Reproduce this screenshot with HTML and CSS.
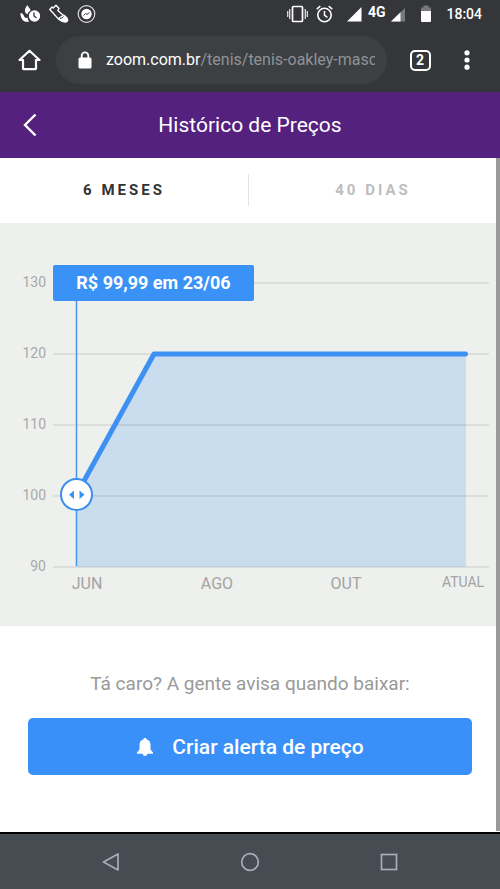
FILE: index.html
```html
<!DOCTYPE html>
<html lang="pt-BR">
<head>
<meta charset="utf-8">
<meta name="viewport" content="width=device-width, initial-scale=1">
<title>Histórico de Preços</title>
<link rel="stylesheet" href="styles.css">
</head>
<body>
<div class="screen">
  <div class="status">
    <div class="status-apps">
      <svg width="21" height="20" viewBox="0 0 21 20">
        <path d="M6 9.500C3.500 6 6 3 7.500 1c.3 2 3 3.500 3 5.500-1.200.8-2.500 2-3.300 4-.5-.6-.7-.9-1.200-1z" fill="#fff"/>
        <path d="M.5 9c2 0 3 1.500 3.500 3 .7 1.800 2 2.500 3.500 1.500.3 2 .8 3 1.800 4C4 19 .2 15 .5 9z" fill="#fff"/>
        <circle cx="14.500" cy="12" r="5.700" fill="#fff"/>
        <path d="M14 8.500V12l2.500 2" fill="none" stroke="#35363a" stroke-width="1.300"/>
      </svg>
      <svg width="20" height="20" viewBox="0 0 20 20">
        <path d="M.8 5.500 3 3l1.200 1L7 1.200 10 4.500 8.800 6.500l5 4.500c3 1.500 5 3.500 4.800 5.700-.3 1.800-3 1.300-5.300.7C10 16.500 8.500 14 5 10z" fill="none" stroke="#fff" stroke-width="1.400" stroke-linejoin="round"/>
        <path d="m9 14 5-3c3 1.500 4.700 3.500 4.500 5.700-.3 1.800-3 1.300-5.300.7-1.700-.8-3-1.700-4.200-3.400z" fill="#fff"/>
        <path d="M11 14.500q2.500-.2 3.500-2" fill="none" stroke="#35363a" stroke-width="1"/>
      </svg>
      <svg width="19" height="20" viewBox="0 0 19 20">
        <circle cx="9.500" cy="10" r="8.300" fill="none" stroke="#ddd" stroke-width="1.200"/>
        <circle cx="9.500" cy="10" r="5.200" fill="#fff"/>
        <path d="m6.500 11.500 2-2 1.500 1 2.500-2" fill="none" stroke="#35363a" stroke-width="1"/>
      </svg>
    </div>
    <div class="status-system">
      <div class="status-alerts">
        <svg width="21" height="18" viewBox="0 0 21 18">
          <rect x="5.500" y="1.500" width="10" height="15" rx="1" fill="none" stroke="#fff" stroke-width="1.700"/>
          <path d="M2.700 4v10M18.300 4v10M.7 6v6M20.300 6v6" stroke="#ddd" stroke-width="1.300"/>
        </svg>
        <svg width="17" height="18" viewBox="0 0 17 18">
          <circle cx="8.500" cy="10" r="6.700" fill="none" stroke="#fff" stroke-width="1.600"/>
          <path d="M8.500 6v4.300l3 2M.7 4.200l3.600-3M16.300 4.200l-3.600-3" fill="none" stroke="#fff" stroke-width="1.500"/>
        </svg>
      </div>
      <div class="status-signal">
        <svg width="15" height="18" viewBox="0 0 15 18"><path d="M14.500 2v14.500H0z" fill="#fff"/></svg>
        <span class="network">4G</span>
        <svg width="15" height="18" viewBox="0 0 15 18"><path d="M14 3v13.500H0z" fill="#77787b"/><path d="M9.500 7.300v9.200H0z" fill="#fff"/></svg>
      </div>
      <svg width="12" height="18" viewBox="0 0 12 18"><path d="M3.500.5h5v2H11V6H1V2.500h2.500z" fill="#77787b"/><path d="M1 6h10v10q0 1-1 1H2q-1 0-1-1z" fill="#fff"/></svg>
      <time class="clock">18:04</time>
    </div>
  </div>

  <div class="browser">
    <button class="icon-button" aria-label="Início">
      <svg width="23" height="22" viewBox="0 0 23 22"><path d="M1.500 11 11.500 1.700 21.500 11H18v8.500q0 .7-.7.7H5.700q-.7 0-.7-.7V11z" fill="none" stroke="#fff" stroke-width="2.200" stroke-linejoin="round"/></svg>
    </button>
    <button class="address">
      <svg class="lock" width="14" height="18" viewBox="0 0 14 18"><path d="M3.700 7V4.700a3.300 3.300 0 0 1 6.600 0V7" fill="none" stroke="#fff" stroke-width="1.800"/><rect x=".5" y="6.500" width="13" height="11" rx="1.500" fill="#fff"/></svg>
      <span class="url">zoom.com.br<span class="path">/tenis/tenis-oakley-masc</span></span>
    </button>
    <button class="icon-button tab-count" aria-label="Guias abertas"><span class="count">2</span></button>
    <button class="icon-button" aria-label="Mais opções">
      <svg width="6" height="20" viewBox="0 0 6 20" fill="#fff"><circle cx="3" cy="2.800" r="2.600"/><circle cx="3" cy="10" r="2.600"/><circle cx="3" cy="17.200" r="2.600"/></svg>
    </button>
  </div>

  <header class="header">
    <button class="back" aria-label="Voltar">
      <svg width="14" height="24" viewBox="0 0 14 24"><path d="M12.500 1.500 2 12l10.500 10.500" fill="none" stroke="#fff" stroke-width="2.400"/></svg>
    </button>
    <h1 class="title">Histórico de Preços</h1>
  </header>

  <main class="page">
    <div class="tabs">
      <button class="tab active">6 MESES</button>
      <button class="tab">40 DIAS</button>
    </div>

    <section class="chart-panel">
      <svg class="chart" viewBox="0 0 500 403" role="img" aria-label="Preço de junho até hoje">
        <path class="area" d="M76.500 271.500 154 131H466V344H76.500z"/>
        <path class="grid" d="M53 60H489M53 131H489M53 202H489M53 273H489M53 344H489"/>
        <g class="y-label">
          <text x="46" y="64">130</text>
          <text x="46" y="135">120</text>
          <text x="46" y="206">110</text>
          <text x="46" y="277">100</text>
          <text x="46" y="348">90</text>
        </g>
        <g class="x-label">
          <text x="87" y="366">JUN</text>
          <text x="217" y="366">AGO</text>
          <text x="346" y="366">OUT</text>
          <text class="current" x="463" y="364">ATUAL</text>
        </g>
        <path class="line" d="M76.500 271.500 154 131H465.500"/>
        <path class="cursor" d="M76.500 60V343"/>
        <circle class="handle" cx="76.500" cy="271.500" r="15.500"/>
        <path class="arrows" d="M74 267.500v8.500l-5-4.250zM79.500 267.500v8.500l5-4.250z"/>
        <rect class="tip" x="53" y="42" width="201" height="36" rx="2"/>
        <text class="tip-text" x="153.500" y="66">R$ 99,99 em 23/06</text>
      </svg>
    </section>

    <section class="alert">
      <p class="question">Tá caro? A gente avisa quando baixar:</p>
      <button class="create">
        <svg width="18" height="20" viewBox="0 0 18 20"><path d="M9 1c1 0 1.700.5 1.700 1.500C13.500 3.300 14.500 5.500 14.500 8v4.500L17 15.500v1.300H1v-1.300l2.500-3V8c0-2.500 1-4.700 3.800-5.500C7.300 1.500 8 1 9 1zM6.500 16.500h5a2.500 2.500 0 0 1-5 0z" fill="#fff"/></svg>
        <span>Criar alerta de preço</span>
      </button>
    </section>
    <div class="scrollbar"></div>
  </main>

  <nav class="nav">
    <button class="nav-button" aria-label="Voltar"><svg width="20" height="20" viewBox="0 0 20 20"><path d="M17 2v16L2.500 10z" fill="none" stroke="#a9adb5" stroke-width="1.700" stroke-linejoin="round"/></svg></button>
    <button class="nav-button" aria-label="Tela inicial"><svg width="20" height="20" viewBox="0 0 20 20"><circle cx="10" cy="10" r="8.300" fill="none" stroke="#a9adb5" stroke-width="1.700"/></svg></button>
    <button class="nav-button" aria-label="Recentes"><svg width="20" height="20" viewBox="0 0 20 20"><rect x="2.500" y="2.500" width="15" height="15" fill="none" stroke="#a9adb5" stroke-width="1.700"/></svg></button>
  </nav>
</div>
</body>
</html>
```
FILE: styles.css
```css
* { box-sizing: border-box; }

body {
  margin: 0;
  font-family: Roboto, "Liberation Sans", sans-serif;
  background: #fff;
}

button {
  margin: 0;
  padding: 0;
  border: 0;
  background: none;
  font-family: inherit;
  color: inherit;
  cursor: pointer;
}

svg { display: block; flex: none; }

.screen {
  min-height: 100vh;
  display: flex;
  flex-direction: column;
}

/* System status bar */
.status {
  display: flex;
  justify-content: space-between;
  align-items: center;
  height: 28px;
  padding: 0 18px 0 20px;
  background: #35363a;
  color: #fff;
}

.status-apps, .status-alerts { display: flex; align-items: center; gap: 8px; }
.status-system { display: flex; align-items: center; gap: 14px; }
.status-signal { display: flex; align-items: center; gap: 6px; }
.network { font-size: 14px; line-height: 14px; font-weight: 700; align-self: flex-start; }
.clock { font-size: 14px; line-height: 20px; font-weight: 500; }

/* Browser toolbar */
.browser {
  display: flex;
  align-items: center;
  height: 64px;
  padding: 0 12px 0 8px;
  background: #35363a;
  color: #fff;
}

.icon-button {
  display: flex;
  align-items: center;
  justify-content: center;
  width: 42px;
  height: 48px;
}

.address {
  flex: 1;
  min-width: 0;
  display: flex;
  align-items: center;
  gap: 14px;
  height: 48px;
  margin: 0 12px 0 6px;
  padding: 0 12px 0 22px;
  border-radius: 24px;
  background: #3c4043;
  text-align: left;
}

.url {
  overflow: hidden;
  white-space: nowrap;
  font-size: 16px;
  line-height: 24px;
}

.path { color: #909396; }
.tab-count { margin-right: 5px; }

.count {
  width: 21px;
  height: 21px;
  border: 2px solid #fff;
  border-radius: 5px;
  font-size: 14px;
  line-height: 17px;
  font-weight: 700;
}

/* Page header */
.header {
  display: grid;
  grid-template-columns: 60px 1fr 60px;
  align-items: center;
  height: 66px;
  background: #55217f;
  color: #fff;
}

.back {
  display: flex;
  align-items: center;
  justify-content: center;
  height: 48px;
}

.title {
  margin: 0;
  text-align: center;
  font-size: 21px;
  line-height: 28px;
  font-weight: 400;
}

/* Period tabs */
.page {
  position: relative;
  flex: 1;
  display: flex;
  flex-direction: column;
}

.tabs {
  display: flex;
  align-items: center;
  height: 65px;
  padding: 0 3px 2px 0;
}

.tab {
  flex: 1;
  height: 32px;
  font-size: 15px;
  line-height: 20px;
  font-weight: 700;
  letter-spacing: 3px;
  color: #bdbdbd;
}

.tab.active { color: #333; border-right: 1px solid #e4e4e4; }

/* Price chart */
.chart-panel { background: #eef0ed; }
.chart { width: 100%; height: auto; }
.area { fill: #3a8ff7; fill-opacity: 0.2; }
.grid { fill: none; stroke: #000; stroke-opacity: 0.1; stroke-width: 1.5; }
.y-label { font-size: 14px; fill: #a9a9a9; text-anchor: end; }
.x-label { font-size: 16px; fill: #a3a3a3; text-anchor: middle; }
.x-label .current { font-size: 14px; }
.line { fill: none; stroke: #3d91f3; stroke-width: 5; stroke-linecap: round; stroke-linejoin: round; }
.cursor { stroke: #4a94ea; stroke-width: 1.5; }
.handle { fill: #fff; stroke: #3b8eed; stroke-width: 2; }
.arrows, .tip { fill: #3b92f6; }
.tip-text { font-size: 18px; font-weight: 700; fill: #fff; text-anchor: middle; }

/* Price alert */
.alert {
  padding: 46px 28px 57px;
  text-align: center;
}

.question {
  margin: 0 0 22px;
  font-size: 19px;
  line-height: 24px;
  color: #999;
}

.create {
  display: flex;
  align-items: center;
  justify-content: center;
  gap: 18px;
  width: 100%;
  height: 57px;
  border-radius: 5px;
  background: #3990f8;
  color: #fff;
  font-size: 21px;
  line-height: 28px;
  font-weight: 500;
}

.scrollbar {
  position: absolute;
  top: 0;
  right: 0;
  bottom: 1px;
  width: 4px;
  background: #999;
}

/* System navigation */
.nav {
  display: flex;
  justify-content: center;
  gap: 91px;
  height: 57px;
  border-top: 2px solid #000;
  background: #454c52;
}

.nav-button {
  display: flex;
  align-items: center;
  justify-content: center;
  width: 48px;
}
```
